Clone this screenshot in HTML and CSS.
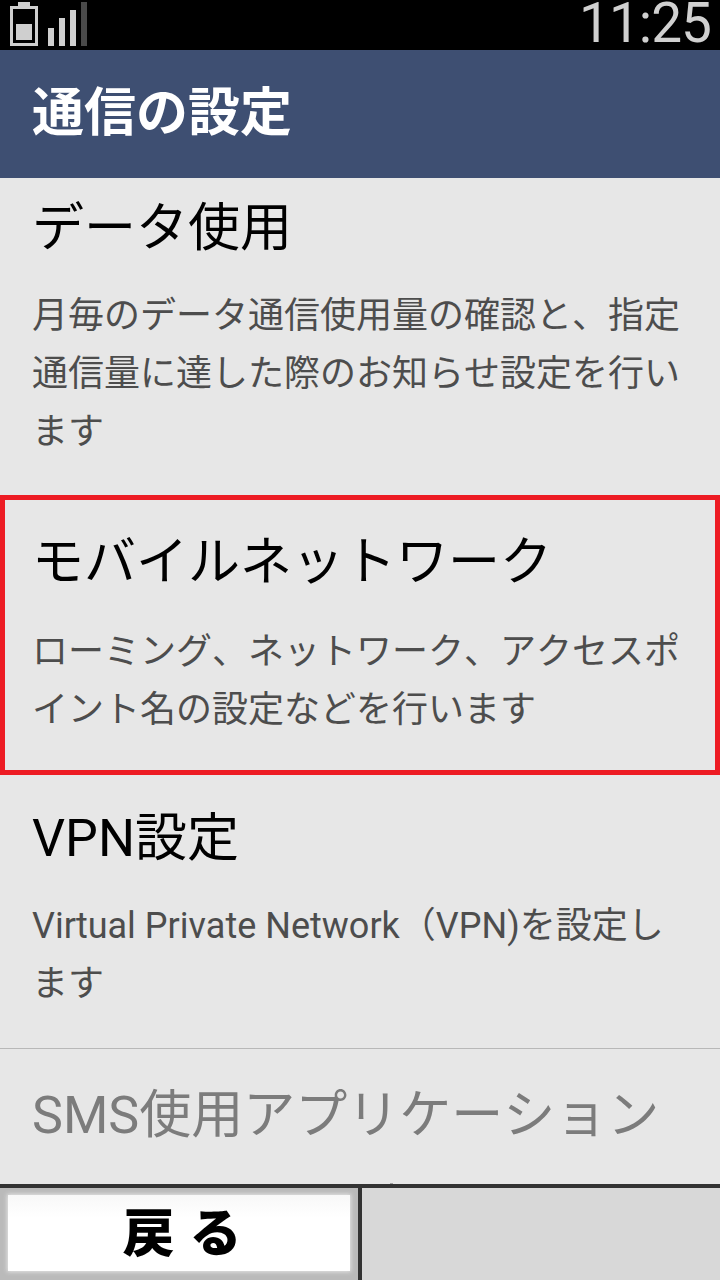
FILE: index.html
```html
<!DOCTYPE html>
<html lang="ja">
<head>
<meta charset="utf-8">
<title>通信の設定</title>
<link rel="stylesheet" href="styles.css">
</head>
<body>
<div class="phone">
  <div class="status">
    <svg class="status-icons" width="90" height="46" viewBox="0 0 90 46">
      <path class="bat" fill-rule="evenodd" d="M18 2h12v4h8v40H10V6h8zM13 9v34h22V9z"/>
      <rect class="bat" x="16" y="24" width="16" height="16"/>
      <rect class="bat" x="48" y="28" width="6" height="18"/>
      <rect class="bat" x="59" y="18" width="6" height="28"/>
      <rect class="bat" x="70" y="10" width="6" height="36"/>
      <rect class="off" x="81" y="2" width="6" height="44"/>
    </svg>
    <span class="clock">11:25</span>
  </div>
  <header class="head"><h1>通信の設定</h1></header>
  <main class="list">
    <section class="row first">
      <h2>データ使用</h2>
      <p>月毎のデータ通信使用量の確認と、指定通信量に達した際のお知らせ設定を行います</p>
    </section>
    <section class="row selected">
      <h2>モバイルネットワーク</h2>
      <p>ローミング、ネットワーク、アクセスポイント名の設定などを行います</p>
    </section>
    <section class="row third">
      <h2>VPN設定</h2>
      <p>Virtual Private Network（VPN)を設定します</p>
    </section>
    <section class="row disabled">
      <h2>SMS使用アプリケーション</h2>
    </section>
  </main>
  <footer class="foot">
    <div class="back"><div class="back-face">戻 る</div></div>
    <div class="blank"></div>
  </footer>
</div>
</body>
</html>
```
FILE: styles.css
```css
* { box-sizing: border-box; margin: 0; padding: 0; }
html, body { width: 720px; height: 1280px; overflow: hidden; background: #e6e6e6; }
body { font-family: Roboto, "Noto Sans CJK JP", sans-serif; }
.phone { width: 720px; height: 1280px; display: flex; flex-direction: column; }
.status { height: 50px; background: #000; display: flex; justify-content: space-between; padding: 0 9px 0 0; flex: none; }
.status-icons { display: block; }
.bat { fill: #cfcfcf; }
.off { fill: #4a4a4a; }
.clock { color: #d0d0d0; font-size: 55px; line-height: 46px; font-weight: 400; letter-spacing: -1px; }
.head { height: 128px; background: #3e4f72; flex: none; padding: 27px 0 0 32px; }
.head h1 { color: #fff; font-size: 52px; line-height: 64px; font-weight: 700; font-family: "Noto Sans CJK JP", sans-serif; }
.list { flex: 1; overflow: hidden; background: #e7e7e7; position: relative; }
.list::after { content: ""; position: absolute; left: 390px; bottom: 0; width: 3px; height: 1px; background: #a0a0a0; }
.row { padding: 0 32px; font-kerning: none; }
.row h2 { font-size: 52px; line-height: 64px; font-weight: 400; color: #000; }
.row p { font-size: 36px; line-height: 58px; color: #4d4d4d; margin-top: 26px; }
.first { height: 317px; padding-top: 19px; }
.selected { height: 280px; border: 5px solid #ed1c24; padding: 31px 27px 0; }
.selected p { margin-top: 28px; }
.third { height: 274px; padding-top: 32px; border-bottom: 1px solid #b8b8b8; }
.disabled { padding-top: 35px; }
.disabled h2 { color: #7c7c7c; }
.foot { height: 96px; flex: none; display: flex; border-top: 4px solid #333; background: #d8d8d8; }
.back { width: 358px; height: 92px; flex: none; background: #bababa; padding: 7px 8px 9px; }
.back-face { height: 76px; line-height: 70px; padding-left: 6px; text-align: center; background: linear-gradient(#f8f8f8, #fff 30%); box-shadow: 0 0 4px 1px #e4e4e4; font-family: "Noto Sans CJK JP", sans-serif; font-size: 52px; font-weight: 900; color: #000; word-spacing: 3px; }
.blank { flex: 1; border-left: 4px solid #333; background: #d8d8d8; }
```
